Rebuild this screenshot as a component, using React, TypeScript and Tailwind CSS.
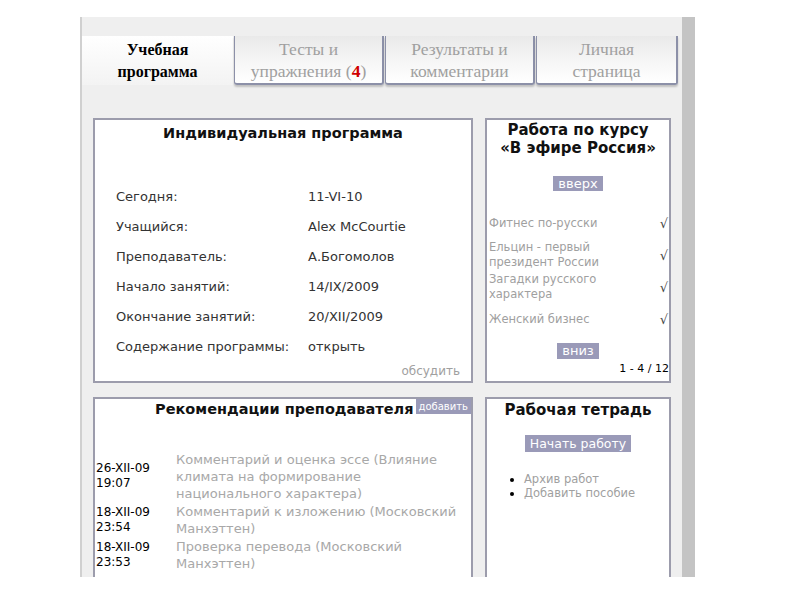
import React from "react";

const tabs = [
  { top: "Тесты и", bottom: "упражнения", badge: "4", w: "w-[150px]" },
  { top: "Результаты и", bottom: "комментарии", w: "w-[150px]" },
  { top: "Личная", bottom: "страница", w: "w-[142px]" },
];

const info = [
  ["Сегодня:", "11-VI-10"],
  ["Учащийся:", "Alex McCourtie"],
  ["Преподаватель:", "А.Богомолов"],
  ["Начало занятий:", "14/IX/2009"],
  ["Окончание занятий:", "20/XII/2009"],
  ["Содержание программы:", "открыть"],
];

const lessons = [
  ["Фитнес по-русски"],
  ["Ельцин - первый", "президент России"],
  ["Загадки русского", "характера"],
  ["Женский бизнес"],
];

const notes = [
  {
    date: "26-XII-09",
    time: "19:07",
    text: "Комментарий и оценка эссе (Влияние климата на формирование национального характера)",
  },
  {
    date: "18-XII-09",
    time: "23:54",
    text: "Комментарий к изложению (Московский Манхэттен)",
  },
  {
    date: "18-XII-09",
    time: "23:53",
    text: "Проверка перевода (Московский Манхэттен)",
  },
];

export default function App() {
  return (
    <div className="w-[800px] h-[600px] bg-white pt-[17px] pl-[80px] font-['DejaVu_Sans',sans-serif]">
      <div className="flex h-[560px]">
        <div className="w-[602px] h-full bg-[#efefef] border-l-2 border-[#d0d0d0] overflow-hidden">
          {/* Tabs */}
          <div className="flex mt-[19px] h-[49px] gap-[1px] font-['Liberation_Serif',serif] leading-[22px]">
            <div className="w-[151px] h-full bg-gradient-to-b from-white to-[#f3f3f3] flex flex-col items-center justify-center font-bold text-[16px] text-black">
              <span>Учебная</span>
              <span>программа</span>
            </div>
            {tabs.map((t) => (
              <div
                key={t.top}
                className={`${t.w} h-full bg-gradient-to-b from-[#e9e9e9] via-[#f5f5f5] to-white border-r-2 border-b-2 border-l border-[#8c90a8] rounded-bl-[3px] rounded-br-[3px] shadow-[0_2px_2px_rgba(0,0,0,0.2)] flex flex-col items-center justify-center text-[#a0a0a0] text-[17.5px]`}
              >
                <span>{t.top}</span>
                <span>
                  {t.bottom}
                  {t.badge && (
                    <>
                      {" "}(<b className="text-[#d00000]">{t.badge}</b>)
                    </>
                  )}
                </span>
              </div>
            ))}
          </div>

          {/* Panels */}
          <div className="grid grid-cols-[380px_186px] gap-x-[12px] gap-y-[14px] pl-[11px] pt-[33px]">
            <div className="h-[265px] bg-white border-2 border-[#9c9cac] flex flex-col relative">
              <div className="text-center font-bold text-[14.5px] text-[#111] mt-[3px]">Индивидуальная программа</div>
              <div className="mt-[37px] pl-[21px] flex flex-col text-[13px] text-[#333]">
                {info.map(([k, v]) => (
                  <div key={k} className="flex h-[30px] items-center">
                    <span className="w-[192px]">{k}</span>
                    <span>{v}</span>
                  </div>
                ))}
              </div>
              <div className="absolute right-[11px] bottom-[1px] text-[12px] text-[#a0a0a0]">обсудить</div>
            </div>

            <div className="h-[265px] bg-white border-2 border-[#9c9cac] flex flex-col">
              <div className="text-center font-bold text-[15px] leading-[18px] text-[#111] mt-[1px]">
                <div>Работа по курсу</div>
                <div>«В эфире Россия»</div>
              </div>
              <div className="flex justify-center mt-[19px]">
                <span className="bg-[#9a9ab8] text-white text-[13px] leading-[15px] px-[5px]">вверх</span>
              </div>
              <div className="mt-[16px] flex flex-col text-[11.5px] leading-[15px] text-[#a0a0a0]">
                {lessons.map((l) => (
                  <div key={l[0]} className="flex items-center justify-between pl-[2px] pr-[1px] h-[32px]">
                    <div>
                      {l.map((s) => (
                        <div key={s}>{s}</div>
                      ))}
                    </div>
                    <span className="text-[#444] text-[13px]">√</span>
                  </div>
                ))}
              </div>
              <div className="flex justify-center mt-[8px]">
                <span className="bg-[#9a9ab8] text-white text-[13px] leading-[16px] px-[5px]">вниз</span>
              </div>
              <div className="text-right text-[11px] text-black leading-[12px] mt-[4px]">1 - 4 / 12</div>
            </div>

            <div className="h-[200px] bg-white border-2 border-[#9c9cac]">
              <div className="flex items-start">
                <div className="flex-1 text-center font-bold text-[14.5px] text-[#111] pl-[58px]">Рекомендации преподавателя</div>
                <span className="bg-[#9a9ab8] text-white text-[10px] leading-[15px] px-[3px]">добавить</span>
              </div>
              <div className="mt-[30px] flex flex-col gap-[1px]">
                {notes.map((n) => (
                  <div key={n.time} className="flex items-center">
                    <div className="w-[81px] pl-[1px] text-[12px] leading-[15px] text-black">
                      <div>{n.date}</div>
                      <div>{n.time}</div>
                    </div>
                    <div className="w-[290px] text-[13px] leading-[17px] text-[#a8a8a8]">{n.text}</div>
                  </div>
                ))}
              </div>
            </div>

            <div className="h-[200px] bg-white border-2 border-[#9c9cac]">
              <div className="text-center font-bold text-[15px] text-[#111]">Рабочая тетрадь</div>
              <div className="flex justify-center mt-[13px]">
                <span className="bg-[#9a9ab8] text-white text-[12.5px] leading-[17px] px-[5px]">Начать работу</span>
              </div>
              <ul className="mt-[20px] pl-[37px] list-disc text-[11.5px] leading-[14px] text-[#a0a0a0] marker:text-black">
                <li>Архив работ</li>
                <li>Добавить пособие</li>
              </ul>
            </div>
          </div>
        </div>
        <div className="w-[13px] h-full bg-[#c4c4c4]" />
      </div>
    </div>
  );
}
